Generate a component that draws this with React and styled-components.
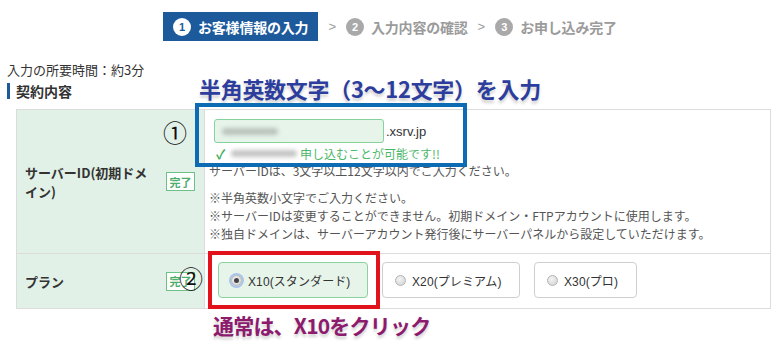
import React from "react";
import styled, { createGlobalStyle } from "styled-components";

const Global = createGlobalStyle`
  html, body { margin: 0; padding: 0; background: #fff; }
  body { font-family: "Noto Sans CJK JP", "Noto Sans", sans-serif; color: #333; }
  * { box-sizing: border-box; }
`;

const Page = styled.div`
  position: relative;
  width: 780px;
  height: 349px;
  overflow: hidden;
`;

const Steps = styled.div`
  display: flex;
  align-items: center;
  padding: 12px 0 0 163px;
`;

const Step = styled.div`
  display: flex;
  align-items: center;
  gap: 7px;
  height: 29px;
  padding: ${(p) => (p.$active ? "0 10px" : "0")};
  background: ${(p) => (p.$active ? "#1c5a9c" : "transparent")};
  color: ${(p) => (p.$active ? "#fff" : "#9b9b9b")};
  font-size: 14px;
  font-weight: 700;
  letter-spacing: -0.2px;
`;

const Num = styled.span`
  width: 18px;
  height: 18px;
  border-radius: 50%;
  background: ${(p) => (p.$active ? "#fff" : "#a9a9a9")};
  color: ${(p) => (p.$active ? "#1c5a9c" : "#fff")};
  font-family: "Liberation Sans", Arial, sans-serif;
  font-size: 11px;
  font-weight: 700;
  display: flex;
  align-items: center;
  justify-content: center;
`;

const Arrow = styled.span`
  color: #9b9b9b;
  font-family: "Liberation Sans", Arial, sans-serif;
  font-size: 13px;
  margin: 0 10px 0 10px;
`;

const Time = styled.div`
  margin-top: 20px;
  padding-left: 7px;
  font-size: 13px;
  line-height: 18px;
  color: #333;
`;

const Heading = styled.h2`
  margin: 4px 0 0 7px;
  padding-left: 6px;
  border-left: 3px solid #1c5a9c;
  font-size: 14px;
  line-height: 16px;
  font-weight: 700;
  color: #333;
`;

const Table = styled.div`
  margin: 10px 0 0 16px;
  width: 755px;
  border: 1px solid #dcdcdc;
  display: grid;
  grid-template-columns: 188px 1fr;
`;

const HeadCell = styled.div`
  background: #e2f1e7;
  border-right: 1px solid #dcdcdc;
  border-top: ${(p) => (p.$first ? "none" : "1px solid #dcdcdc")};
  height: ${(p) => p.$h}px;
  display: flex;
  align-items: center;
  justify-content: space-between;
  padding: 0 9px 0 8px;
`;

const Label = styled.div`
  width: 125px;
  font-size: 13px;
  line-height: 19px;
  font-weight: 700;
  color: #333;
`;

const Badge = styled.span`
  width: 29px;
  height: 19px;
  border: 1px solid #6cc187;
  background: #fff;
  color: #4cae6c;
  font-size: 11px;
  font-weight: 700;
  display: flex;
  align-items: center;
  justify-content: center;
`;

const BodyCell = styled.div`
  border-top: ${(p) => (p.$first ? "none" : "1px solid #dcdcdc")};
  height: ${(p) => p.$h}px;
  padding: ${(p) => p.$pad};
`;

const InputRow = styled.div`
  display: flex;
  align-items: center;
  margin-left: 5px;
`;

const Input = styled.div`
  width: 170px;
  height: 24px;
  border: 1px solid #86d29c;
  border-radius: 3px;
  background: #e6f4ea;
  display: flex;
  align-items: center;
  padding-left: 7px;
`;

const Blur = styled.span`
  display: inline-block;
  width: ${(p) => p.$w}px;
  height: 7px;
  border-radius: 4px;
  background: ${(p) => p.$c};
  filter: blur(2px);
`;

const Domain = styled.span`
  font-family: "Liberation Sans", Arial, sans-serif;
  font-size: 13px;
  color: #333;
  margin-left: 2px;
`;

const OkLine = styled.div`
  margin: 1px 0 0 7px;
  height: 18px;
  display: flex;
  align-items: center;
  gap: 3px;
  color: #4cb86a;
  font-size: 12px;
`;

const Check = styled.span`
  font-size: 13px;
  font-weight: 700;
  color: #3fae5e;
  width: 12px;
`;

const Help = styled.div`
  font-size: 12px;
  line-height: 18px;
  color: #555;
  margin-top: ${(p) => p.$mt || 0}px;
`;

const Plans = styled.div`
  display: flex;
  gap: 14px;
`;

const PlanButton = styled.div`
  width: ${(p) => p.$w}px;
  height: 36px;
  border-radius: 4px;
  border: 1px solid ${(p) => (p.$selected ? "#88d39e" : "#cfcfcf")};
  background: ${(p) => (p.$selected ? "#e6f4ea" : "#fff")};
  display: flex;
  align-items: center;
  gap: 6px;
  padding-left: 12px;
  font-size: 12px;
  color: #333;
`;

const Radio = styled.span`
  width: 11px;
  height: 11px;
  border-radius: 50%;
  border: 1px solid #b5b5b5;
  background: radial-gradient(circle at 40% 35%, #f4f4f4, #cfcfcf);
  display: flex;
  align-items: center;
  justify-content: center;
  box-shadow: ${(p) => (p.$checked ? "0 0 0 2px #aac4ea" : "none")};
  &::after {
    content: "";
    width: 5px;
    height: 5px;
    border-radius: 50%;
    background: ${(p) => (p.$checked ? "#444" : "transparent")};
  }
`;

const PlanText = styled.span`
  font-family: "Liberation Sans", "Noto Sans CJK JP", sans-serif;
  letter-spacing: 0.1px;
`;

const Annotation = styled.div`
  position: absolute;
  left: ${(p) => p.$x}px;
  top: ${(p) => p.$y}px;
  font-size: ${(p) => p.$size}px;
  letter-spacing: ${(p) => p.$ls || 0}px;
  line-height: 1.15;
  font-weight: 700;
  color: ${(p) => p.$color};
  white-space: nowrap;
  text-shadow: 0 3px 3px rgba(0, 0, 0, 0.18);
`;

const Frame = styled.div`
  position: absolute;
  left: ${(p) => p.$x}px;
  top: ${(p) => p.$y}px;
  width: ${(p) => p.$w}px;
  height: ${(p) => p.$h}px;
  border: 4px solid ${(p) => p.$color};
  pointer-events: none;
`;

const Marker = styled.div`
  position: absolute;
  left: ${(p) => p.$x}px;
  top: ${(p) => p.$y}px;
  font-size: 24px;
  line-height: 1;
  color: #111;
  font-family: "Noto Sans CJK JP", sans-serif;
`;

export default function App() {
  return (
    <>
      <Global />
      <Page>
        <Steps>
          <Step $active>
            <Num $active>1</Num>
            お客様情報の入力
          </Step>
          <Arrow>&gt;</Arrow>
          <Step>
            <Num>2</Num>
            入力内容の確認
          </Step>
          <Arrow>&gt;</Arrow>
          <Step>
            <Num>3</Num>
            お申し込み完了
          </Step>
        </Steps>

        <Time>入力の所要時間：約3分</Time>
        <Heading>契約内容</Heading>

        <Table>
          <HeadCell $first $h={143}>
            <Label>サーバーID(初期ドメイン)</Label>
            <Badge>完了</Badge>
          </HeadCell>
          <BodyCell $first $h={143} $pad="9px 0 0 4px">
            <InputRow>
              <Input>
                <Blur $w={56} $c="#b9c2bc" />
              </Input>
              <Domain>.xsrv.jp</Domain>
            </InputRow>
            <OkLine>
              <Check>✓</Check>
              <Blur $w={66} $c="#c4c4c4" />
              申し込むことが可能です!!
            </OkLine>
            <Help>サーバーIDは、3文字以上12文字以内でご入力ください。</Help>
            <Help $mt={9}>※半角英数小文字でご入力ください。</Help>
            <Help>※サーバーIDは変更することができません。初期ドメイン・FTPアカウントに使用します。</Help>
            <Help>※独自ドメインは、サーバーアカウント発行後にサーバーパネルから設定していただけます。</Help>
          </BodyCell>

          <HeadCell $h={55}>
            <Label>プラン</Label>
            <Badge>完了</Badge>
          </HeadCell>
          <BodyCell $h={55} $pad="8px 0 0 13px">
            <Plans>
              <PlanButton $selected $w={150}>
                <Radio $checked />
                <PlanText>X10(スタンダード)</PlanText>
              </PlanButton>
              <PlanButton $w={138}>
                <Radio />
                <PlanText>X20(プレミアム)</PlanText>
              </PlanButton>
              <PlanButton $w={103}>
                <Radio />
                <PlanText>X30(プロ)</PlanText>
              </PlanButton>
            </Plans>
          </BodyCell>
        </Table>

        <Annotation $x={199} $y={76} $size={22} $ls={-0.3} $color="#2c3d9d">
          半角英数文字（3〜12文字）を入力
        </Annotation>
        <Frame $x={195} $y={103} $w={272} $h={64} $color="#0d6bb3" />
        <Marker $x={163} $y={120}>①</Marker>

        <Frame $x={208} $y={251} $w={172} $h={58} $color="#e1121c" />
        <Marker $x={179} $y={266}>②</Marker>
        <Annotation $x={213} $y={313} $size={21} $ls={-0.8} $color="#8c1b6d">
          通常は、X10をクリック
        </Annotation>
      </Page>
    </>
  );
}
